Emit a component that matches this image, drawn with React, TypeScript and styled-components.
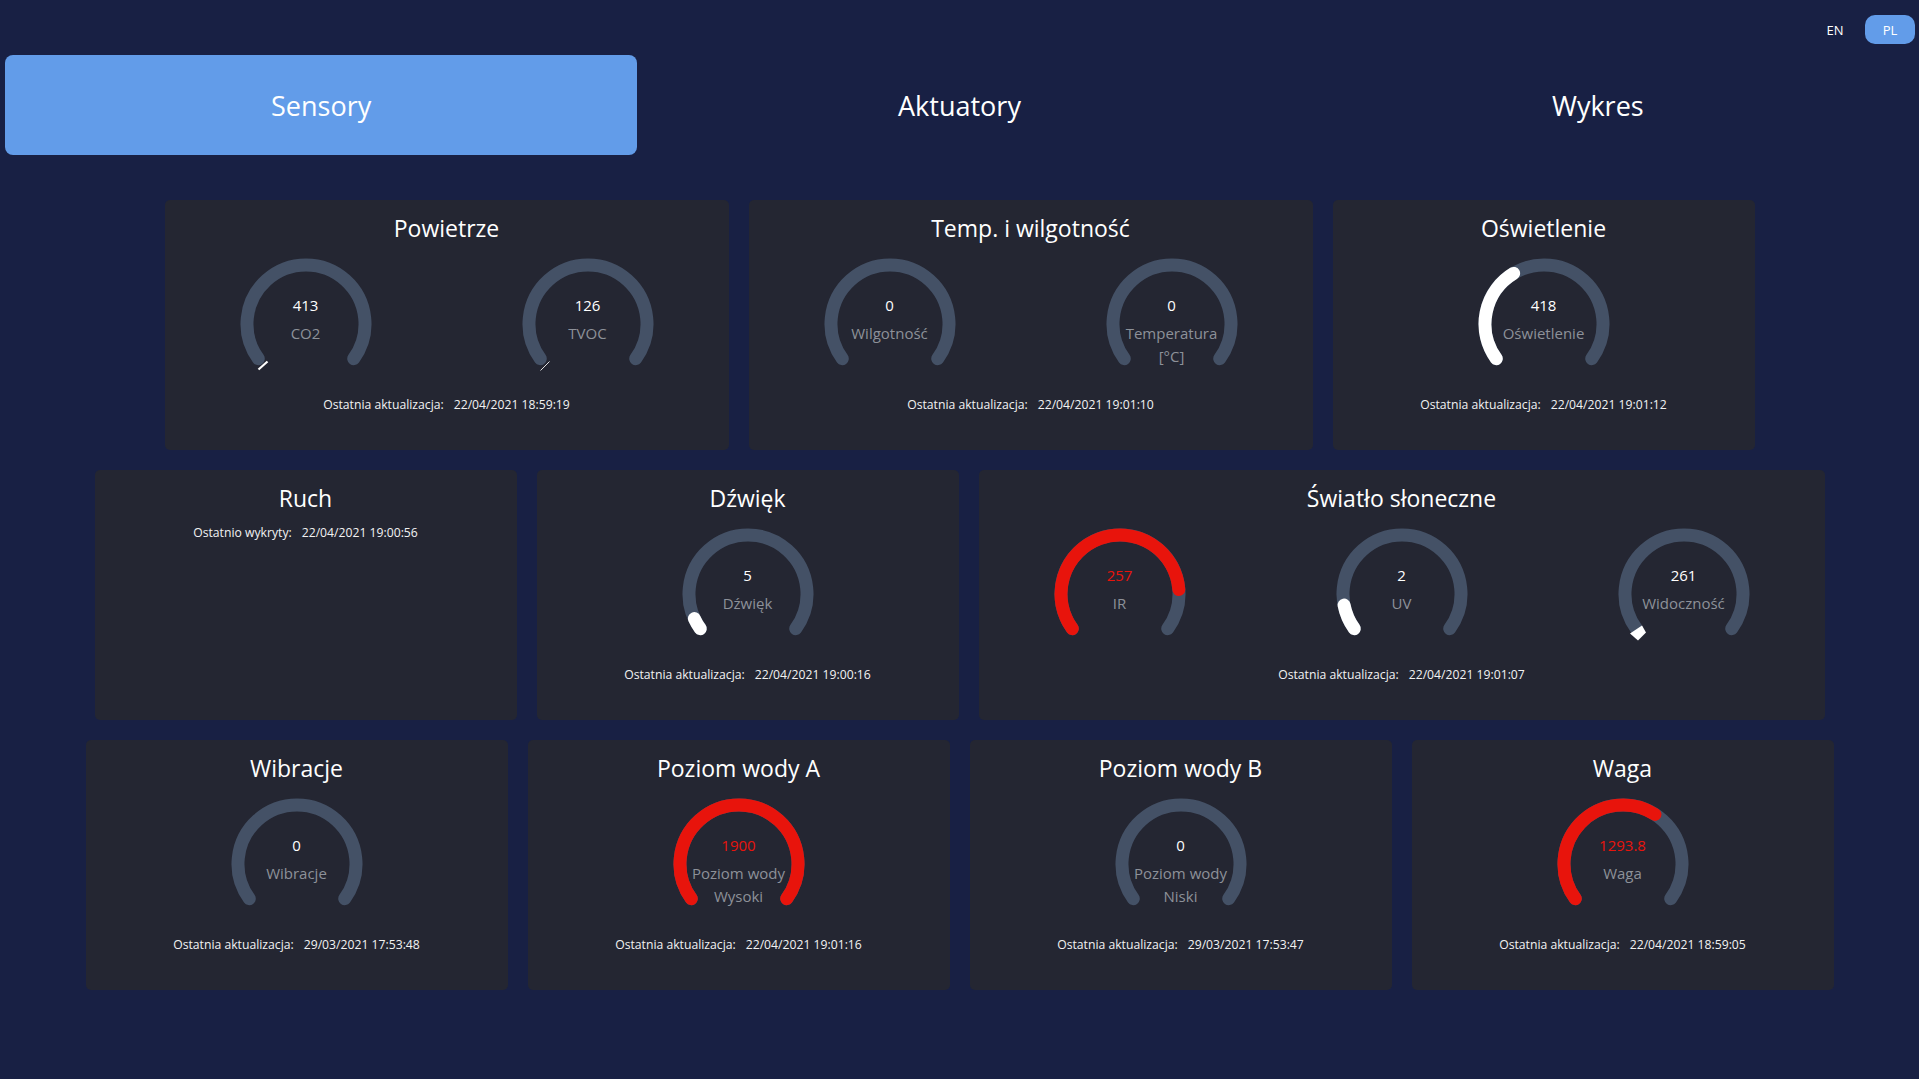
import React from "react";
import styled, { createGlobalStyle } from "styled-components";

const GlobalStyle = createGlobalStyle`
  html, body {
    margin: 0;
    padding: 0;
    background: #182044;
  }
  body {
    font-family: "Open Sans", "Noto Sans", "Liberation Sans", sans-serif;
    color: #ffffff;
  }
  * { box-sizing: border-box; }
`;

const Page = styled.div`
  min-height: 100vh;
  background: #182044;
  padding-top: 15px;
`;

const LangBar = styled.div`
  display: flex;
  justify-content: flex-end;
  gap: 5px;
  padding: 0 4px;
`;

const LangButton = styled.button<{ $active?: boolean }>`
  width: 50px;
  height: 29px;
  border: none;
  border-radius: 10px;
  background: ${(p) => (p.$active ? "#629ce9" : "transparent")};
  color: #ffffff;
  font-family: "Open Sans", sans-serif;
  font-size: 13px;
  cursor: pointer;
  padding: 0;
`;

const Tabs = styled.div`
  display: grid;
  grid-template-columns: repeat(3, 1fr);
  gap: 6px;
  padding: 0 5px;
  margin-top: 11px;
`;

const Tab = styled.button<{ $active?: boolean }>`
  height: 100px;
  border: none;
  border-radius: 8px;
  background: ${(p) => (p.$active ? "#629ce9" : "transparent")};
  color: #ffffff;
  font-family: "Open Sans", sans-serif;
  font-size: 27px;
  cursor: pointer;
`;

const Board = styled.div`
  display: flex;
  flex-direction: column;
  gap: 20px;
  margin-top: 45px;
  padding-bottom: 89px;
`;

const Row = styled.div`
  display: flex;
  justify-content: center;
  gap: 20px;
`;

const Card = styled.section<{ $width: number }>`
  width: ${(p) => p.$width}px;
  height: 250px;
  background: #242632;
  border-radius: 5px;
  padding: 12px 0;
  display: flex;
  flex-direction: column;
  align-items: center;
`;

const CardTitle = styled.h2`
  margin: 0;
  height: 32px;
  line-height: 32px;
  font-size: 23px;
  font-weight: 400;
  color: #ffffff;
  text-align: center;
`;

const GaugeRow = styled.div`
  display: flex;
  justify-content: center;
  margin-top: 14px;
`;

const GaugeCell = styled.div`
  width: 282px;
  display: flex;
  justify-content: center;
`;

const GaugeBox = styled.div`
  position: relative;
  width: 132px;
  height: 132px;
`;

const Readout = styled.div`
  position: absolute;
  top: 37px;
  left: -20px;
  right: -20px;
  display: flex;
  flex-direction: column;
  align-items: center;
  text-align: center;
`;

const Value = styled.div<{ $alert?: boolean }>`
  height: 20px;
  line-height: 20px;
  font-size: 15px;
  color: ${(p) => (p.$alert ? "#e8140c" : "#ffffff")};
`;

const Label = styled.div`
  margin-top: 7px;
  line-height: 23px;
  font-size: 15px;
  color: #8d9199;
  white-space: pre-line;
`;

const Footer = styled.div<{ $tight?: boolean }>`
  margin-top: ${(p) => (p.$tight ? "10px" : "6px")};
  height: 18px;
  line-height: 18px;
  font-size: 12.2px;
  color: #f2f2f2;
  display: flex;
  gap: 10px;
`;

const TRACK = "#445166";
const RED = "#e8140c";
const C = 66;
const R = 59;
const START = 144;
const SWEEP = 252;

const pt = (deg: number) => {
  const a = (deg * Math.PI) / 180;
  return `${(C + R * Math.cos(a)).toFixed(2)} ${(C + R * Math.sin(a)).toFixed(2)}`;
};

const arc = (from: number, to: number) => {
  const large = to - from > 180 ? 1 : 0;
  return `M ${pt(from)} A ${R} ${R} 0 ${large} 1 ${pt(to)}`;
};

type Mark = "tick" | "thin" | "diamond" | undefined;

type GaugeData = {
  value: string;
  label: string;
  fraction?: number;
  alert?: boolean;
  mark?: Mark;
};

const Gauge: React.FC<GaugeData> = ({ value, label, fraction = 0, alert, mark }) => {
  const color = alert ? RED : "#ffffff";
  return (
    <GaugeCell>
      <GaugeBox>
        <svg width="132" height="132" viewBox="0 0 132 132">
          <path d={arc(START, START + SWEEP)} fill="none" stroke={TRACK} strokeWidth={13} strokeLinecap="round" />
          {fraction > 0 && (
            <path
              d={arc(START, START + SWEEP * fraction)}
              fill="none"
              stroke={color}
              strokeWidth={13}
              strokeLinecap="round"
            />
          )}
          {mark === "tick" && <line x1={18.5} y1={111.5} x2={27.5} y2={103.5} stroke="#ffffff" strokeWidth={2.2} />}
          {mark === "thin" && (
            <line x1={18.5} y1={112.5} x2={27.5} y2={103.5} stroke="#ffffff" strokeOpacity={0.85} strokeWidth={1} />
          )}
          {mark === "diamond" && <polygon points="24,97.5 28,104.5 20,112.5 12,105.5" fill="#ffffff" />}
        </svg>
        <Readout>
          <Value $alert={alert}>{value}</Value>
          <Label>{label}</Label>
        </Readout>
      </GaugeBox>
    </GaugeCell>
  );
};

type CardData = {
  title: string;
  width: number;
  gauges: GaugeData[];
  footerLabel: string;
  date: string;
};

const rows: CardData[][] = [
  [
    {
      title: "Powietrze",
      width: 564,
      gauges: [
        { value: "413", label: "CO2", mark: "tick" },
        { value: "126", label: "TVOC", mark: "thin" },
      ],
      footerLabel: "Ostatnia aktualizacja:",
      date: "22/04/2021 18:59:19",
    },
    {
      title: "Temp. i wilgotność",
      width: 564,
      gauges: [
        { value: "0", label: "Wilgotność" },
        { value: "0", label: "Temperatura\n[°C]" },
      ],
      footerLabel: "Ostatnia aktualizacja:",
      date: "22/04/2021 19:01:10",
    },
    {
      title: "Oświetlenie",
      width: 422,
      gauges: [{ value: "418", label: "Oświetlenie", fraction: 0.377 }],
      footerLabel: "Ostatnia aktualizacja:",
      date: "22/04/2021 19:01:12",
    },
  ],
  [
    {
      title: "Ruch",
      width: 422,
      gauges: [],
      footerLabel: "Ostatnio wykryty:",
      date: "22/04/2021 19:00:56",
    },
    {
      title: "Dźwięk",
      width: 422,
      gauges: [{ value: "5", label: "Dźwięk", fraction: 0.045 }],
      footerLabel: "Ostatnia aktualizacja:",
      date: "22/04/2021 19:00:16",
    },
    {
      title: "Światło słoneczne",
      width: 846,
      gauges: [
        { value: "257", label: "IR", fraction: 0.84, alert: true },
        { value: "2", label: "UV", fraction: 0.1 },
        { value: "261", label: "Widoczność", mark: "diamond" },
      ],
      footerLabel: "Ostatnia aktualizacja:",
      date: "22/04/2021 19:01:07",
    },
  ],
  [
    {
      title: "Wibracje",
      width: 422,
      gauges: [{ value: "0", label: "Wibracje" }],
      footerLabel: "Ostatnia aktualizacja:",
      date: "29/03/2021 17:53:48",
    },
    {
      title: "Poziom wody A",
      width: 422,
      gauges: [{ value: "1900", label: "Poziom wody\nWysoki", fraction: 1, alert: true }],
      footerLabel: "Ostatnia aktualizacja:",
      date: "22/04/2021 19:01:16",
    },
    {
      title: "Poziom wody B",
      width: 422,
      gauges: [{ value: "0", label: "Poziom wody\nNiski" }],
      footerLabel: "Ostatnia aktualizacja:",
      date: "29/03/2021 17:53:47",
    },
    {
      title: "Waga",
      width: 422,
      gauges: [{ value: "1293.8", label: "Waga", fraction: 0.63, alert: true }],
      footerLabel: "Ostatnia aktualizacja:",
      date: "22/04/2021 18:59:05",
    },
  ],
];

const SensorCard: React.FC<{ data: CardData }> = ({ data }) => (
  <Card $width={data.width}>
    <CardTitle>{data.title}</CardTitle>
    {data.gauges.length > 0 && (
      <GaugeRow>
        {data.gauges.map((g) => (
          <Gauge key={g.label} {...g} />
        ))}
      </GaugeRow>
    )}
    <Footer $tight={data.gauges.length === 0}>
      <span>{data.footerLabel}</span>
      <span>{data.date}</span>
    </Footer>
  </Card>
);

export default function App() {
  return (
    <>
      <GlobalStyle />
      <Page>
        <LangBar>
          <LangButton>EN</LangButton>
          <LangButton $active>PL</LangButton>
        </LangBar>
        <Tabs>
          <Tab $active>Sensory</Tab>
          <Tab>Aktuatory</Tab>
          <Tab>Wykres</Tab>
        </Tabs>
        <Board>
          {rows.map((row, i) => (
            <Row key={i}>
              {row.map((c) => (
                <SensorCard key={c.title} data={c} />
              ))}
            </Row>
          ))}
        </Board>
      </Page>
    </>
  );
}
